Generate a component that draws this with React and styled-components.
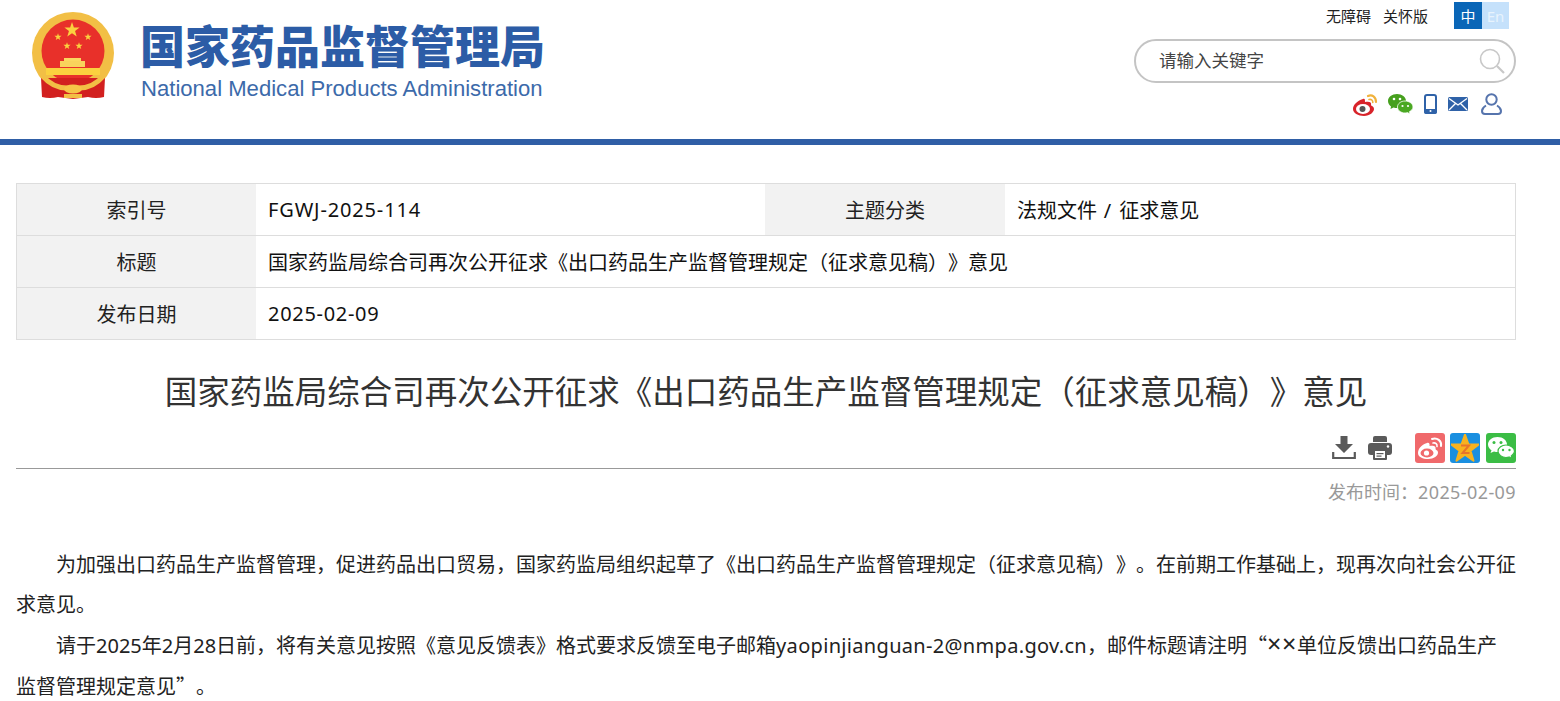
import styled, { createGlobalStyle } from 'styled-components';

const GlobalStyle = createGlobalStyle`
  html, body {
    margin: 0;
    padding: 0;
    background: #fff;
    overflow: hidden;
  }
  body {
    font-family: "Noto Sans", "Noto Sans CJK SC", sans-serif;
    color: #222;
    text-spacing-trim: space-all;
  }
`;

const Header = styled.header`
  height: 139px;
  display: flex;
  justify-content: space-between;
  border-bottom: 6px solid #2f5ea6;
`;

const Brand = styled.div`
  display: flex;
  padding: 10px 0 0 30px;
  gap: 25px;
  align-items: flex-start;
`;

const BrandText = styled.div`
  display: flex;
  flex-direction: column;
  padding-top: 6px;
`;

const BrandName = styled.div`
  font-family: "Noto Sans CJK SC", sans-serif;
  font-weight: 900;
  font-size: 45px;
  line-height: 58px;
  color: #2c5ca6;
  white-space: nowrap;
  margin-left: -1px;
`;

const BrandEnglish = styled.div`
  font-family: "Liberation Sans", sans-serif;
  font-size: 22.1px;
  line-height: 26px;
  margin-top: 2px;
  color: #3c6aaa;
  white-space: nowrap;
`;

const Tools = styled.div`
  width: 426px;
  display: flex;
  flex-direction: column;
  align-items: flex-end;
  padding-right: 44px;
  box-sizing: border-box;
`;

const TopLinks = styled.div`
  display: flex;
  align-items: center;
  height: 27px;
  margin-top: 2px;
  margin-right: 7px;
`;

const TopLink = styled.span`
  font-family: "Noto Sans CJK SC", sans-serif;
  font-size: 15px;
  color: #222;
  margin-right: ${(p) => p.$gap}px;
`;

const Lang = styled.span`
  width: ${(p) => p.$w}px;
  height: 27px;
  display: flex;
  align-items: center;
  justify-content: center;
  font-size: 15px;
  background: ${(p) => (p.$active ? '#0a66b7' : '#c5e1fb')};
  color: ${(p) => (p.$active ? '#fff' : '#e8f3fd')};
`;

const Search = styled.div`
  width: 382px;
  height: 44px;
  margin-top: 10px;
  box-sizing: border-box;
  border: 2px solid #c4c4c4;
  border-radius: 22px;
  display: flex;
  align-items: center;
  justify-content: space-between;
  padding: 0 9px 0 23px;
`;

const Placeholder = styled.span`
  font-family: "Noto Sans CJK SC", sans-serif;
  font-size: 17.5px;
  color: #444;
  margin-top: -3px;
`;

const IconRow = styled.div`
  display: flex;
  align-items: center;
  height: 24px;
  margin-top: 9px;
  margin-right: 14px;
`;

const IconSlot = styled.span`
  display: flex;
  margin-left: ${(p) => p.$gap}px;
`;

const Main = styled.main`
  margin: 38px 44px 0 16px;
`;

const InfoTable = styled.table`
  width: 100%;
  border-collapse: collapse;
  table-layout: fixed;
  font-size: 20px;
  color: #222;
  border: 1px solid #ddd;
`;

const LabelCell = styled.td`
  width: ${(p) => p.$w || 239}px;
  height: 51px;
  padding: 0;
  text-align: center;
  background: #f2f2f2;
  border-bottom: 1px solid #ddd;
`;

const ValueCell = styled.td`
  width: ${(p) => (p.$w ? `${p.$w}px` : 'auto')};
  padding: 0 0 0 12px;
  box-sizing: border-box;
  border-bottom: 1px solid #ddd;
  color: #111;
`;

// latin runs of the reference font are a bit wider than Noto Sans
const Latin = styled.span`
  letter-spacing: ${(p) => p.$ls}px;
`;

const Title = styled.h1`
  margin: 28px 0 0;
  font-weight: 400;
  font-size: 32.5px;
  line-height: 48px;
  text-align: center;
  color: #333;
  white-space: nowrap;
`;

const ActionBar = styled.div`
  display: flex;
  justify-content: flex-end;
  align-items: center;
  height: 30px;
  margin-top: 17px;
  padding-bottom: 5px;
  border-bottom: 1px solid #999;
`;

const Meta = styled.div`
  margin-top: 11px;
  text-align: right;
  font-size: 18px;
  line-height: 24px;
  color: #999;
`;

const Article = styled.div`
  margin-top: 41px;
`;

const Para = styled.p`
  margin: 0;
  font-size: 20px;
  line-height: 40px;
  color: #222;
  text-indent: 40px;
  text-align: ${(p) => (p.$justify ? 'justify' : 'left')};
`;

const Cjk = styled.span`
  font-family: "Noto Sans CJK SC", sans-serif;
`;

const Times = styled.span`
  font-size: 25px;
  line-height: 20px;
  letter-spacing: 0.7px;
`;

const starPoints = (cx, cy, r) =>
  Array.from({ length: 10 }, (_, i) => {
    const rad = i % 2 ? r * 0.4 : r;
    const a = (-90 + i * 36) * (Math.PI / 180);
    return `${(cx + rad * Math.cos(a)).toFixed(2)},${(cy + rad * Math.sin(a)).toFixed(2)}`;
  }).join(' ');

function Emblem() {
  return (
    <svg width="86" height="92" viewBox="30 10 86 92">
      <circle cx="73" cy="53" r="41" fill="#f2bf45" />
      <circle cx="73" cy="51" r="31.5" fill="#e8302a" />
      <path d="M41 78 L105 78 L104 97 Q96 99 88 97 L73 99 L58 97 Q50 99 42 97 Z" fill="#d2201f" />
      <polygon points={starPoints(72, 30, 8)} fill="#fbd13f" />
      <polygon points={starPoints(58, 37, 3.8)} fill="#fbd13f" />
      <polygon points={starPoints(88, 37, 3.8)} fill="#fbd13f" />
      <polygon points={starPoints(67, 46, 3.8)} fill="#fbd13f" />
      <polygon points={starPoints(79, 46, 3.8)} fill="#fbd13f" />
      <rect x="64" y="58" width="17" height="3" fill="#fbd760" />
      <rect x="60" y="61" width="25" height="6" fill="#f9d35c" />
      <rect x="46" y="68" width="54" height="7" fill="#fbd13f" />
      <path d="M44 74 Q56 88 73 85 Q90 88 102 74 L105 78 Q92 93 73 90 Q54 93 41 78 Z" fill="#f2bf45" />
      <ellipse cx="73" cy="89" rx="9" ry="4.5" fill="#f6c548" />
      <rect x="64" y="94" width="18" height="4" fill="#f2bf45" />
    </svg>
  );
}

function WeiboSmall() {
  return (
    <svg width="25" height="23" viewBox="0 0 25 23">
      <path d="M10 6 C4 8 0 12 0 16 C0 20 5 23 11 23 C17 23 21 19 21 16 C21 13 18 13 18 12 C19 9 16 8 12 9 C12 7 12 5 10 6 Z" fill="#d8232a" />
      <ellipse cx="10" cy="16" rx="7" ry="5" fill="#fff" />
      <circle cx="9.5" cy="16" r="3" fill="#555" />
      <path d="M15 3 C19 1 23 4 23 9" fill="none" stroke="#f0b23c" strokeWidth="2.2" strokeLinecap="round" />
      <path d="M16 6.5 C18 6 20 7 19.8 9.5" fill="none" stroke="#f0b23c" strokeWidth="1.6" strokeLinecap="round" />
    </svg>
  );
}

function WechatSmall() {
  return (
    <svg width="25" height="21" viewBox="0 0 25 21">
      <path d="M9 0 C4 0 0 3 0 7 C0 9.5 1.5 11.3 3 12.5 L2.5 15 L5.5 13.5 C7 14 8 14 9 14 C14 14 18 11 18 7 C18 3 14 0 9 0 Z" fill="#46a01e" />
      <path d="M17 7 C13 7 9.5 9.5 9.5 13 C9.5 16.5 13 19 17 19 C18 19 18.5 19 19.5 18.6 L22 20 L21.5 17.6 C23.5 16.5 25 15 25 13 C25 9.5 21 7 17 7 Z" fill="#4ba823" stroke="#fff" strokeWidth="0.8" />
      <circle cx="6" cy="5" r="1.3" fill="#fff" />
      <circle cx="12" cy="5" r="1.3" fill="#fff" />
      <circle cx="14.5" cy="12" r="1.1" fill="#fff" />
      <circle cx="20" cy="12" r="1.1" fill="#fff" />
    </svg>
  );
}

function PhoneIcon() {
  return (
    <svg width="13" height="20" viewBox="0 0 13 20">
      <rect x="1" y="1" width="11" height="18" rx="2" fill="#fff" stroke="#2f62a8" strokeWidth="2" />
      <rect x="0" y="15" width="13" height="5" rx="2" fill="#2f62a8" />
      <circle cx="6.5" cy="17" r="1" fill="#fff" />
    </svg>
  );
}

function MailIcon() {
  return (
    <svg width="20" height="14" viewBox="0 0 20 14">
      <rect width="20" height="14" rx="1.5" fill="#2f62a8" />
      <path d="M1 1.5 L10 8 L19 1.5 M1 13 L7.5 6.5 M19 13 L12.5 6.5" fill="none" stroke="#fff" strokeWidth="1.4" />
    </svg>
  );
}

function UserIcon() {
  return (
    <svg width="21" height="22" viewBox="0 0 21 22">
      <circle cx="10.5" cy="6.5" r="5.2" fill="none" stroke="#5674ad" strokeWidth="2" />
      <path d="M5 12.5 C2.5 14 1 15.5 1 18 C1 20 2 21 4 21 L17 21 C19 21 20 20 20 18 C20 15.5 18.5 14 16 12.5" fill="none" stroke="#5674ad" strokeWidth="2" />
    </svg>
  );
}

function SearchIcon() {
  return (
    <svg width="26" height="26" viewBox="0 0 26 26">
      <circle cx="11" cy="11" r="9.5" fill="none" stroke="#c8c8c8" strokeWidth="1.6" />
      <path d="M18 18 L25 25" stroke="#c8c8c8" strokeWidth="2.2" />
    </svg>
  );
}

function DownloadIcon() {
  return (
    <svg width="24" height="24" viewBox="0 0 24 24">
      <path d="M8.5 0 H15.5 V8 H21 L12 17 L3 8 H8.5 Z" fill="#5a5a5a" />
      <path d="M1.2 16 V22 H22.8 V16" fill="none" stroke="#5a5a5a" strokeWidth="2.2" />
    </svg>
  );
}

function PrintIcon() {
  return (
    <svg width="24" height="24" viewBox="0 0 24 24">
      <path d="M5 6 V2 Q5 0 7 0 H17 Q19 0 19 2 V6 Z" fill="#5a5a5a" />
      <rect x="0" y="7" width="24" height="12" rx="3" fill="#5a5a5a" />
      <rect x="5" y="13" width="14" height="11" rx="1" fill="#5a5a5a" />
      <rect x="7" y="15" width="10" height="7" fill="#fff" />
      <rect x="8.5" y="17" width="7" height="1.2" fill="#5a5a5a" />
      <rect x="8.5" y="19.5" width="5" height="1.2" fill="#5a5a5a" />
      <circle cx="20" cy="10.5" r="1.2" fill="#fff" />
    </svg>
  );
}

const ShareTile = styled.span`
  width: 30px;
  height: 30px;
  display: flex;
  align-items: center;
  justify-content: center;
  border-radius: 3px;
  margin-left: ${(p) => p.$gap}px;
  background: ${(p) => p.$bg};
`;

function WeiboShare() {
  return (
    <svg width="26" height="24" viewBox="0 0 26 24">
      <path d="M10 7 C4 9 1 13 1 17 C1 21 6 23 11 23 C17 23 21 20 21 16.5 C21 14 18.5 14 18.5 13 C19.5 10 16 9 12.5 10 C13 8 12 6 10 7 Z" fill="#fff" />
      <ellipse cx="10" cy="17" rx="6.5" ry="4.4" fill="#f0696b" />
      <circle cx="9.5" cy="17" r="2.6" fill="#fff" />
      <path d="M15 3 C20 1 25 5 24 10" fill="none" stroke="#fff" strokeWidth="2" strokeLinecap="round" />
      <path d="M16 7 C18.5 6.5 20.5 8 20 10.5" fill="none" stroke="#fff" strokeWidth="1.6" strokeLinecap="round" />
    </svg>
  );
}

function ZoneShare() {
  return (
    <svg width="28" height="28" viewBox="0 0 28 28">
      <polygon points={starPoints(14, 15, 14.5)} fill="#f7b21f" stroke="#f7b21f" strokeWidth="2" strokeLinejoin="round" />
      <path d="M10 11.5 H18 L11.5 19 H18.5" fill="none" stroke="#e8742a" strokeWidth="2" />
    </svg>
  );
}

function WechatShare() {
  return (
    <svg width="28" height="24" viewBox="0 0 28 24">
      <path d="M10.5 1 C5 1 1 4.5 1 8.5 C1 11 2.5 13 4.5 14.3 L3.5 17 L7 15.4 C8.5 15.8 9.5 16 10.5 16 C16 16 20 12.5 20 8.5 C20 4.5 16 1 10.5 1 Z" fill="#fff" />
      <path d="M19 9 C15 9 11 11.5 11 15.3 C11 19 15 21.5 19 21.5 C20 21.5 21 21.3 22 21 L25 22.5 L24.3 20 C26 18.8 27.5 17.3 27.5 15.3 C27.5 11.5 23 9 19 9 Z" fill="#fff" stroke="#3bbd45" strokeWidth="1.2" />
      <circle cx="7" cy="6.5" r="1.5" fill="#3bbd45" />
      <circle cx="14" cy="6.5" r="1.5" fill="#3bbd45" />
      <circle cx="16" cy="14" r="1.2" fill="#3bbd45" />
      <circle cx="22.5" cy="14" r="1.2" fill="#3bbd45" />
    </svg>
  );
}

export default function App() {
  return (
    <>
      <GlobalStyle />
      <Header>
        <Brand>
          <Emblem />
          <BrandText>
            <BrandName>国家药品监督管理局</BrandName>
            <BrandEnglish>National Medical Products Administration</BrandEnglish>
          </BrandText>
        </Brand>
        <Tools>
          <TopLinks>
            <TopLink $gap={12}>无障碍</TopLink>
            <TopLink $gap={26}>关怀版</TopLink>
            <Lang $active $w={28}>中</Lang>
            <Lang $w={27}>En</Lang>
          </TopLinks>
          <Search>
            <Placeholder>请输入关键字</Placeholder>
            <SearchIcon />
          </Search>
          <IconRow>
            <WeiboSmall />
            <IconSlot $gap={10}><WechatSmall /></IconSlot>
            <IconSlot $gap={11}><PhoneIcon /></IconSlot>
            <IconSlot $gap={11}><MailIcon /></IconSlot>
            <IconSlot $gap={13}><UserIcon /></IconSlot>
          </IconRow>
        </Tools>
      </Header>
      <Main>
        <InfoTable>
          <tbody>
            <tr>
              <LabelCell>索引号</LabelCell>
              <ValueCell $w={509}><Latin $ls={0.85}>FGWJ-2025-114</Latin></ValueCell>
              <LabelCell $w={240}>主题分类</LabelCell>
              <ValueCell>法规文件<Latin $ls={1.5}> / </Latin>征求意见</ValueCell>
            </tr>
            <tr>
              <LabelCell>标题</LabelCell>
              <ValueCell colSpan={3}>国家药监局综合司再次公开征求《出口药品生产监督管理规定（征求意见稿）》意见</ValueCell>
            </tr>
            <tr>
              <LabelCell>发布日期</LabelCell>
              <ValueCell colSpan={3}><Latin $ls={0.7}>2025-02-09</Latin></ValueCell>
            </tr>
          </tbody>
        </InfoTable>
        <Title>国家药监局综合司再次公开征求《出口药品生产监督管理规定（征求意见稿）》意见</Title>
        <ActionBar>
          <DownloadIcon />
          <IconSlot $gap={12}><PrintIcon /></IconSlot>
          <ShareTile $gap={23} $bg="#f0696b"><WeiboShare /></ShareTile>
          <ShareTile $gap={5} $bg="#1a8fe0"><ZoneShare /></ShareTile>
          <ShareTile $gap={6} $bg="#3bbd45"><WechatShare /></ShareTile>
        </ActionBar>
        <Meta>发布时间：<Latin $ls={0.4}>2025-02-09</Latin></Meta>
        <Article>
          <Para $justify>为加强出口药品生产监督管理，促进药品出口贸易，国家药监局组织起草了《出口药品生产监督管理规定（征求意见稿）》。在前期工作基础上，现再次向社会公开征求意见。</Para>
          <Para>请于2025年2月28日前，将有关意见按照《意见反馈表》格式要求反馈至电子邮箱<Latin $ls={0.32}>yaopinjianguan-2@nmpa.gov.cn</Latin>，邮件标题请注明<Cjk>“</Cjk><Times>××</Times>单位反馈出口药品生产<Cjk>监督管理规定意见”</Cjk>。</Para>
        </Article>
      </Main>
    </>
  );
}
